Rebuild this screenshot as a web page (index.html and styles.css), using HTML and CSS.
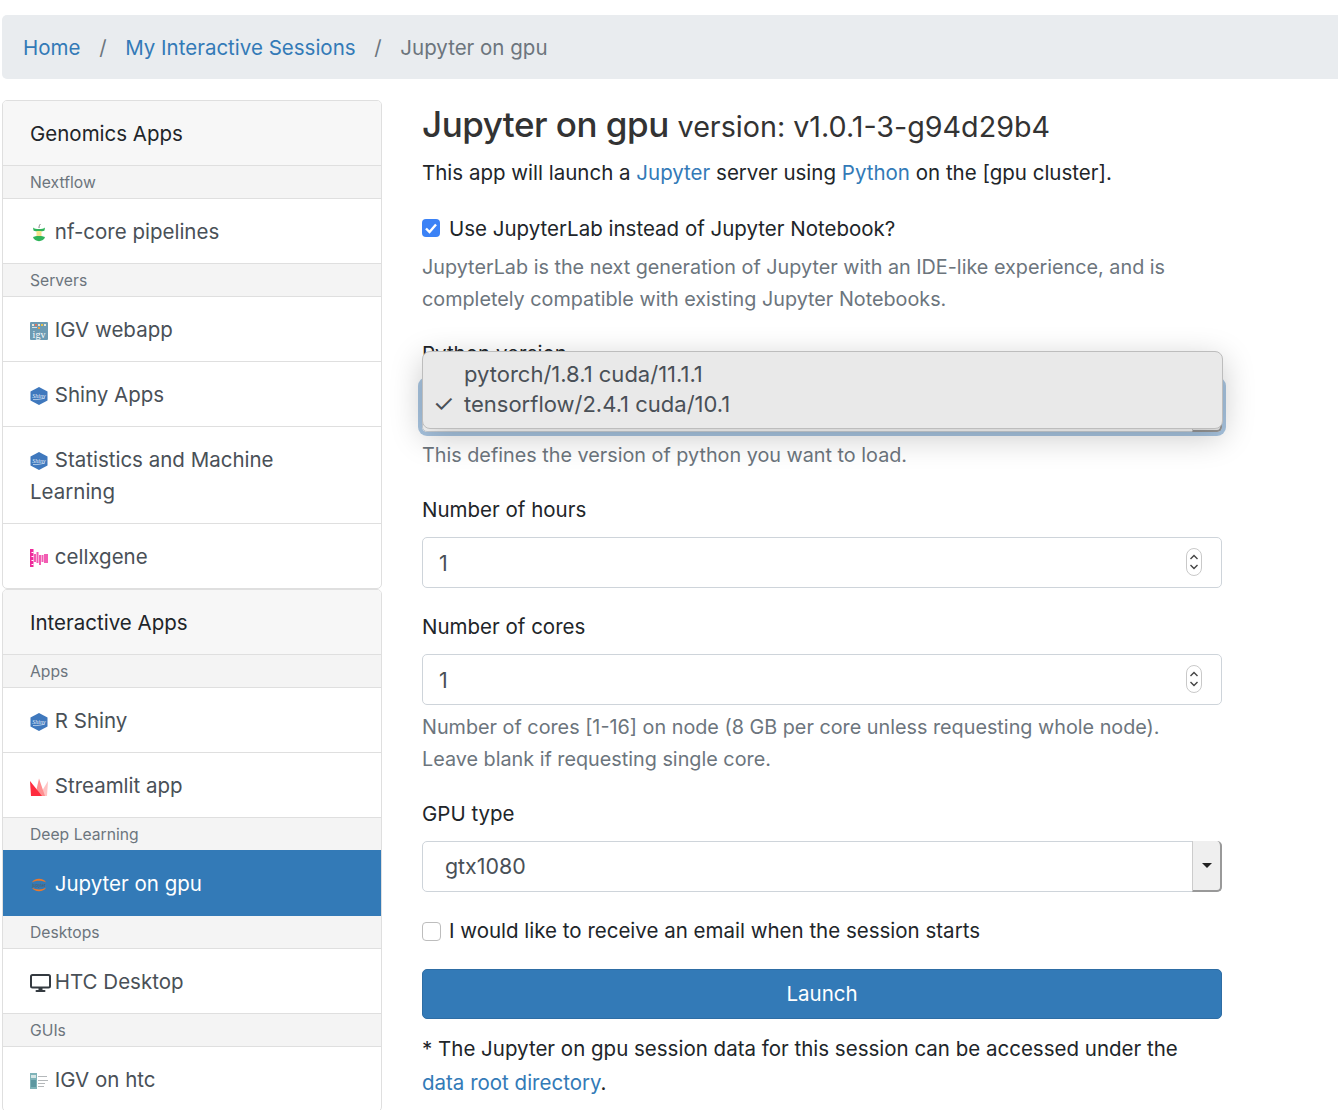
FILE: index.html
```html
<!DOCTYPE html>
<html lang="en">
<head>
  <meta charset="UTF-8" />
  <title>Jupyter on gpu</title>
  <link rel="stylesheet" href="styles.css">
</head>
<body>
  <nav class="breadcrumb">
    <a href="#">Home</a>
    <span class="sep">/</span>
    <a href="#">My Interactive Sessions</a>
    <span class="sep">/</span>
    <span class="current">Jupyter on gpu</span>
  </nav>

  <div class="layout">
    <aside class="sidebar">
      <div class="group">
        <div class="group-head">Genomics Apps</div>
        <div class="sub-head">Nextflow</div>
        <a class="item" href="#">
          <svg class="icon" viewBox="0 0 18 18"><path d="M10.500 0 C9.500 1 9 2 9 4" fill="none" stroke="#777" stroke-width=".9"/><path d="M3 3.500 C5 5.500 13 5.500 15 3.500 L14.500 6.500 C12 8 6 8 3.500 6.500Z" fill="#2fb45a"/><rect x="6.500" y="7" width="5" height="6" fill="#f3e58c"/><path d="M3 13 C5 11.500 13 11.500 15 13 C14 18.500 4 18.500 3 13Z" fill="#2fb45a"/></svg>
          nf-core pipelines
        </a>
        <div class="sub-head">Servers</div>
        <a class="item" href="#">
          <svg class="icon" viewBox="0 0 18 18"><rect width="18" height="18" rx="1" fill="#6d9bb3"/><g fill="#e8e6d8"><rect x="2" y="2" width="2" height="2"/><rect x="8" y="2" width="2" height="2"/><rect x="14" y="2" width="2" height="2"/></g><rect x="5" y="2" width="2" height="2" fill="#e0735a"/><rect x="11" y="2" width="2" height="2" fill="#e5c14c"/><rect x="8" y="5" width="2" height="2" fill="#e5a04c"/><rect x="2" y="5" width="5" height="1" fill="#d7e2e6"/><text class="igv-text" x="9" y="16" text-anchor="middle">igv</text></svg>
          IGV webapp
        </a>
        <a class="item" href="#">
          <svg class="icon" viewBox="0 0 18 18"><path d="M9 0 L17.500 4.500 V13.500 L9 18 L.5 13.500 V4.500Z" fill="#3f78bd"/><text class="shiny-text" x="9" y="10.500" text-anchor="middle">Shiny</text><path d="M3 12.500 C7 13 11 12 15 11" fill="none" stroke="#dbe8f5" stroke-width=".7"/></svg>
          Shiny Apps
        </a>
        <a class="item" href="#">
          <svg class="icon" viewBox="0 0 18 18"><path d="M9 0 L17.500 4.500 V13.500 L9 18 L.5 13.500 V4.500Z" fill="#3f78bd"/><text class="shiny-text" x="9" y="10.500" text-anchor="middle">Shiny</text><path d="M3 12.500 C7 13 11 12 15 11" fill="none" stroke="#dbe8f5" stroke-width=".7"/></svg>
          Statistics and Machine Learning
        </a>
        <a class="item" href="#">
          <svg class="icon" viewBox="0 0 18 18"><rect x="0" y="0" width="3.500" height="18" fill="#ee2a9b"/><g fill="#fff"><rect x="1.500" y="3" width="2" height="1"/><rect x="1.500" y="7" width="2" height="1"/><rect x="1.500" y="11" width="2" height="1"/><rect x="1.500" y="15" width="2" height="1"/></g><g fill="#f25cb2"><rect x="4" y="5" width="2" height="8"/><rect x="6.500" y="3" width="2" height="11"/><rect x="9" y="6" width="2" height="10"/><rect x="11.500" y="6" width="2" height="7"/><rect x="14" y="5" width="4" height="9"/></g></svg>
          cellxgene
        </a>
      </div>

      <div class="group">
        <div class="group-head">Interactive Apps</div>
        <div class="sub-head">Apps</div>
        <a class="item" href="#">
          <svg class="icon" viewBox="0 0 18 18"><path d="M9 0 L17.500 4.500 V13.500 L9 18 L.5 13.500 V4.500Z" fill="#3f78bd"/><text class="shiny-text" x="9" y="10.500" text-anchor="middle">Shiny</text><path d="M3 12.500 C7 13 11 12 15 11" fill="none" stroke="#dbe8f5" stroke-width=".7"/></svg>
          R Shiny
        </a>
        <a class="item" href="#">
          <svg class="icon" viewBox="0 0 18 18"><path d="M18 3 L17 18 H9Z" fill="#ffc4c4"/><path d="M9 .5 L15 18 H5Z" fill="#ff8f90"/><path d="M0 3 L12 18 H1Z" fill="#ff2b3e"/></svg>
          Streamlit app
        </a>
        <div class="sub-head">Deep Learning</div>
        <a class="item active" href="#">
          <svg class="icon" viewBox="0 0 18 18"><path d="M2 6.500 C4 1.500 14 1.500 16 6.500 C12.500 4 5.500 4 2 6.500Z" fill="#e9792d"/><path d="M2 11.500 C4 16.500 14 16.500 16 11.500 C12.500 14 5.500 14 2 11.500Z" fill="#e9792d"/><text class="jupyter-text" x="9" y="10.500" text-anchor="middle">jupyter</text></svg>
          Jupyter on gpu
        </a>
        <div class="sub-head">Desktops</div>
        <a class="item" href="#">
          <svg class="icon monitor" viewBox="0 0 21 18"><rect x="1" y="1" width="19" height="12.500" rx="1.500" fill="none" stroke="#343a40" stroke-width="2"/><rect x="8.500" y="14" width="4" height="2.500" fill="#343a40"/><rect x="5.500" y="16" width="10" height="2" rx="1" fill="#343a40"/></svg>
          HTC Desktop
        </a>
        <div class="sub-head">GUIs</div>
        <a class="item" href="#">
          <svg class="icon" viewBox="0 0 18 18"><rect x="0" y="1" width="7" height="16" fill="#7fb3b8"/><rect x="1" y="3" width="5" height="3" fill="#d5e6e6"/><rect x="1" y="8" width="5" height="7" fill="#5d97a0"/><g fill="#b4b8ba"><rect x="8" y="4" width="9" height="1"/><rect x="8" y="8" width="10" height="1"/><rect x="8" y="11" width="7" height="1"/><rect x="8" y="14" width="6" height="1"/></g></svg>
          IGV on htc
        </a>
      </div>
    </aside>

    <main class="content">
      <h3 class="title">Jupyter on gpu <small>version: v1.0.1-3-g94d29b4</small></h3>
      <p class="intro">This app will launch a <a href="#">Jupyter</a> server using <a href="#">Python</a> on the [gpu cluster].</p>

      <form>
        <div class="field check-field">
          <label class="check-line">
            <span class="box checked"><svg viewBox="0 0 18 18"><path d="M4 9.500 L7.500 13 L14 5.500" fill="none" stroke="#fff" stroke-width="2.400"/></svg></span>
            Use JupyterLab instead of Jupyter Notebook?
          </label>
          <div class="hint tight">JupyterLab is the next generation of Jupyter with an IDE-like experience, and is completely compatible with existing Jupyter Notebooks.</div>
        </div>

        <div class="field">
          <label class="field-label">Python version</label>
          <div class="select-wrap focused">
            <div class="select-box"></div>
            <span class="select-btn"></span>
            <div class="popup">
              <div class="popup-row"><span class="tick"></span>pytorch/1.8.1 cuda/11.1.1</div>
              <div class="popup-row"><span class="tick">✓</span>tensorflow/2.4.1 cuda/10.1</div>
            </div>
          </div>
          <div class="hint">This defines the version of python you want to load.</div>
        </div>

        <div class="field">
          <label class="field-label">Number of hours</label>
          <div class="number-wrap">
            <input class="input" type="number" value="1">
            <svg class="spin" viewBox="0 0 16 28"><rect x=".5" y=".5" width="15" height="27" rx="7.500" fill="#fff" stroke="#c9c9c9"/><path d="M4.500 11 L8 7.500 L11.500 11 M4.500 17 L8 20.500 L11.500 17" fill="none" stroke="#444" stroke-width="1.400"/></svg>
          </div>
        </div>

        <div class="field">
          <label class="field-label">Number of cores</label>
          <div class="number-wrap">
            <input class="input" type="number" value="1">
            <svg class="spin" viewBox="0 0 16 28"><rect x=".5" y=".5" width="15" height="27" rx="7.500" fill="#fff" stroke="#c9c9c9"/><path d="M4.500 11 L8 7.500 L11.500 11 M4.500 17 L8 20.500 L11.500 17" fill="none" stroke="#444" stroke-width="1.400"/></svg>
          </div>
          <div class="hint tight">Number of cores [1-16] on node (8 GB per core unless requesting whole node).<br>Leave blank if requesting single core.</div>
        </div>

        <div class="field">
          <label class="field-label">GPU type</label>
          <div class="select-wrap">
            <div class="select-box">gtx1080</div>
            <span class="select-btn"><span class="caret"></span></span>
          </div>
        </div>

        <div class="field email-field">
          <label class="check-line">
            <span class="box"></span>
            I would like to receive an email when the session starts
          </label>
        </div>

        <button class="launch" type="button">Launch</button>
      </form>

      <p class="note">* The Jupyter on gpu session data for this session can be accessed under the <a href="#">data root directory</a>.</p>
    </main>
  </div>
</body>
</html>
```

FILE: styles.css
```css
html, body {
  height: 100%;
  overflow: hidden;
}

body {
  margin: 0;
  padding: 15px 0 0 2px;
  box-sizing: border-box;
  background-color: #fff;
  color: #212529;
  font-family: Inter, "Noto Sans", sans-serif;
  font-size: 20.5px;
  line-height: 32px;
}

a {
  color: #337ab7;
  text-decoration: none;
}

.breadcrumb {
  display: flex;
  align-items: center;
  height: 64px;
  box-sizing: border-box;
  padding: 2px 0 0 21px;
  background-color: #e9ecef;
  border-radius: 5px 0 0 5px;
}

.sep {
  margin: 0 18.700px;
  color: #6c757d;
}

.current {
  color: #6c757d;
}

.layout {
  display: grid;
  grid-template-columns: 380px 800px;
  column-gap: 40px;
  margin-top: 21px;
}

/* sidebar */
.group {
  border: 1px solid #dfdfdf;
  border-radius: 5px;
  overflow: hidden;
}

.group-head {
  padding: 17px 27px 15px;
  background-color: #f7f7f7;
  color: #212529;
}

.sub-head {
  padding: 4px 27px 2px;
  background-color: #f4f4f4;
  border-top: 1px solid #dfdfdf;
  color: #6c757d;
  font-size: 15.700px;
  line-height: 26px;
}

.item {
  display: block;
  padding: 17px 27px 15px;
  border-top: 1px solid #dfdfdf;
  color: #495057;
}

.item.active {
  padding-bottom: 16px;
  background-color: #337ab7;
  border-top-color: #337ab7;
  color: #fff;
}

.item.active + .sub-head {
  border-top: none;
}

.icon {
  display: inline-block;
  width: 18px;
  height: 18px;
  margin-right: 1px;
  vertical-align: -3px;
}

.icon.monitor {
  width: 21px;
  margin-right: -2px;
}

.shiny-text {
  fill: #e6f0fa;
  font-family: "Liberation Serif", serif;
  font-style: italic;
  font-size: 6px;
}

.igv-text {
  fill: #fff;
  font-family: "Liberation Serif", serif;
  font-size: 10px;
}

.jupyter-text {
  fill: #5a5a5a;
  font-family: "Liberation Sans", sans-serif;
  font-size: 4.500px;
}

/* main form */
.title {
  margin: 2px 0 0;
  color: #333;
  font-size: 35px;
  font-weight: 500;
  line-height: 44px;
  letter-spacing: -0.5px;
}

.title small {
  font-size: 28.700px;
  font-weight: 400;
  letter-spacing: 0;
}

.intro {
  margin: 8px 0 0;
}

.field {
  margin-top: 23px;
}

.check-field {
  margin-top: 24px;
}

.field-label {
  display: block;
  margin-bottom: 11px;
}

.check-line {
  display: flex;
  align-items: center;
  gap: 8px;
}

.box {
  flex: none;
  width: 19px;
  height: 19px;
  box-sizing: border-box;
  border: 1px solid #bdbdbd;
  border-radius: 4px;
  background-color: #fff;
}

.box.checked {
  width: 18px;
  height: 18px;
  margin: -3px 1px 0 0;
  border: none;
  background-color: #3b82f6;
}

.box svg {
  display: block;
}

.hint {
  margin-top: 7px;
  color: #6c757d;
  font-size: 19.800px;
}

.hint.tight {
  margin-top: 6px;
}

.number-wrap,
.select-wrap {
  position: relative;
}

.input,
.select-box {
  display: block;
  width: 100%;
  height: 51px;
  box-sizing: border-box;
  padding: 0 16px;
  border: 1px solid #ced4da;
  border-radius: 5px;
  background-color: #fff;
  color: #495057;
  font: inherit;
  font-size: 21.400px;
  line-height: 49px;
}

.input::-webkit-inner-spin-button,
.input::-webkit-outer-spin-button {
  -webkit-appearance: none;
}

.spin {
  position: absolute;
  top: 11px;
  right: 20px;
  width: 16px;
  height: 28px;
}

.select-box {
  padding-left: 22px;
}

.select-btn {
  position: absolute;
  top: 0;
  right: 0;
  display: flex;
  align-items: center;
  justify-content: center;
  width: 30px;
  height: 51px;
  box-sizing: border-box;
  background-color: #efefef;
  border-left: 1px solid #ccc;
  border-right: 2px solid #999;
  border-bottom: 2px solid #999;
  border-radius: 0 5px 5px 0;
}

.caret {
  width: 0;
  height: 0;
  border-left: 5px solid transparent;
  border-right: 5px solid transparent;
  border-top: 5px solid #222;
}

.focused {
  border-radius: 5px;
  box-shadow: 0 0 0 4px #a9c6e2;
}

.popup {
  position: absolute;
  top: -30px;
  left: 0;
  right: -1px;
  height: 78px;
  box-sizing: border-box;
  padding: 7px 0;
  background-color: #e9e9e9;
  border: 1px solid #bdbdbd;
  border-radius: 8px;
  box-shadow: 0 8px 32px rgba(0, 0, 0, 0.22);
  color: #495057;
  font-size: 22px;
  line-height: 30px;
}

.popup-row {
  display: flex;
}

.tick {
  width: 41px;
  padding-left: 10px;
  box-sizing: border-box;
  font-size: 24px;
}

.email-field {
  margin-top: 23px;
}

.launch {
  display: block;
  width: 100%;
  height: 50px;
  margin-top: 22px;
  background-color: #337ab7;
  border: 1px solid #2e6da4;
  border-radius: 5px;
  color: #fff;
  font: inherit;
}

.note {
  margin: 13px 0 0;
  line-height: 34px;
}
```
